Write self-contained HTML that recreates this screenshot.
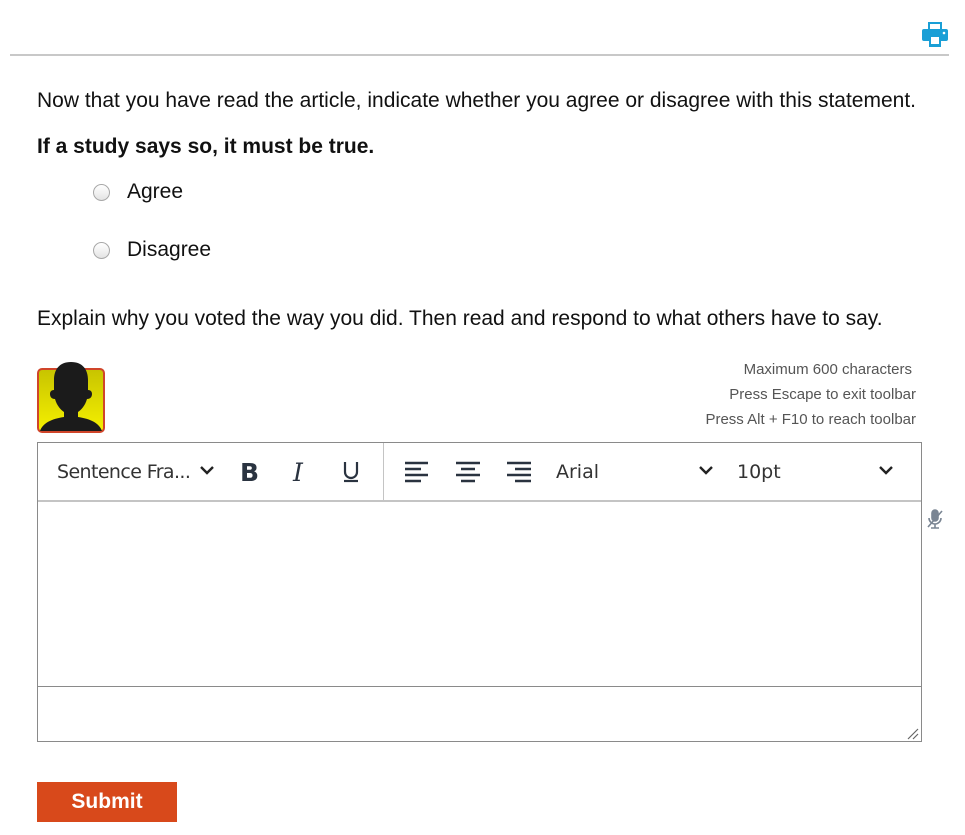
<!DOCTYPE html>
<html><head><style>
body{margin:0;width:965px;height:835px;background:#fff;font-family:"Liberation Sans",Arial,sans-serif;color:#111;position:relative;overflow:hidden}
.a{position:absolute}
.t{font-size:21px;white-space:nowrap}
.radio{width:17px;height:17px;border-radius:50%;border:1px solid #a8a8a8;background:linear-gradient(#fff,#e4e4e4);box-sizing:border-box}
.s{font-size:15px;color:#555;right:49px;white-space:nowrap}
.tb{font-family:"DejaVu Sans","Liberation Sans",sans-serif;color:#333;font-size:19px}
</style></head><body>
<svg class="a" style="left:921px;top:21px" width="28" height="27" viewBox="0 0 28 27">
<rect x="7" y="1" width="14" height="7" fill="#1a9fd6"/>
<rect x="1" y="8" width="26" height="12" rx="2" fill="#1a9fd6"/>
<rect x="9" y="3" width="10" height="5" fill="#fff"/>
<rect x="8" y="15" width="12" height="11" fill="#1a9fd6"/>
<rect x="10" y="16" width="8" height="7" fill="#fff"/>
<circle cx="23" cy="12" r="1.3" fill="#fff"/>
</svg>
<div class="a" style="left:10px;top:54px;width:939px;height:2px;background:#c8c8c8"></div>
<div class="a t" style="left:37px;top:89px">Now that you have read the article, indicate whether you agree or disagree with this statement.</div>
<div class="a t" style="left:37px;top:135px;font-weight:bold">If a study says so, it must be true.</div>
<div class="a radio" style="left:93px;top:184px"></div>
<div class="a t" style="left:127px;top:180px">Agree</div>
<div class="a radio" style="left:93px;top:242px"></div>
<div class="a t" style="left:127px;top:238px">Disagree</div>
<div class="a t" style="left:37px;top:307px">Explain why you voted the way you did. Then read and respond to what others have to say.</div>
<div class="a" style="left:37px;top:368px;width:68px;height:65px;border:2px solid #d0452a;border-radius:5px;box-sizing:border-box;background:linear-gradient(#c8c400,#f5f000);overflow:hidden"></div>
<svg class="a" style="left:37px;top:360px" width="68" height="73" viewBox="0 0 68 73">
<path d="M34 2C22 2 17 10 17 20v10c-3 0-4 2-4 4s1 5 5 5c2 7 6 11 9 13v5C14 59 6 63 3 71h62c-3-8-11-12-24-14v-5c3-2 7-6 9-13 4 0 5-3 5-5s-1-4-4-4V20C51 10 46 2 34 2z" fill="#1b1b1b"/>
</svg>
<div class="a s" style="top:361px;right:53px">Maximum 600 characters</div>
<div class="a s" style="top:386px">Press Escape to exit toolbar</div>
<div class="a s" style="top:411px">Press Alt + F10 to reach toolbar</div>
<div class="a" style="left:37px;top:442px;width:885px;height:300px;border:1px solid #8a8a8a;box-sizing:border-box"></div>
<div class="a" style="left:38px;top:500px;width:883px;height:2px;background:#c4c4c4"></div>
<div class="a" style="left:38px;top:686px;width:883px;height:1px;background:#8a8a8a"></div>
<div class="a" style="left:383px;top:443px;width:1px;height:57px;background:#c4c4c4"></div>
<div class="a tb" style="left:57px;top:461px;letter-spacing:-0.6px">Sentence Fra...</div>
<div class="a tb" style="left:556px;top:461px">Arial</div>
<div class="a tb" style="left:737px;top:461px">10pt</div>
<svg class="a" style="left:0;top:443px" width="921" height="57">
<g fill="none" stroke="#222" stroke-width="2.4">
<path d="M201 24l6 6 6-6M700 24l6 6 6-6M880 24l6 6 6-6"/>
</g>
<text x="240" y="38" font-family="DejaVu Sans,sans-serif" font-weight="bold" font-size="25" fill="#2a3340">B</text>
<text x="293" y="38" font-family="DejaVu Serif,serif" font-style="italic" font-size="25" fill="#2a3340">I</text>
<g fill="none" stroke="#2a3340" stroke-width="2.2">
<path d="M345 19v10a6 6 0 0 0 12 0V19"/>
<path d="M344 38h14"/>
</g>
<g stroke="#2a3340" stroke-width="2.5">
<path d="M405 20h23M405 26h16M405 32h23M405 38h16"/>
<path d="M456 20h24M461 26h14M456 32h24M461 38h14"/>
<path d="M507 20h24M515 26h16M507 32h24M515 38h16"/>
</g>
</svg>
<svg class="a" style="left:926px;top:508px" width="20" height="22" viewBox="0 0 20 22">
<g fill="none" stroke="#7a8593" stroke-width="1.6">
<rect x="6" y="2" width="6" height="11" rx="3" fill="#7a8593"/>
<path d="M3 10a6 6 0 0 0 12 0M9 16v4M5 20h8M2 19L16 3"/>
</g></svg>
<svg class="a" style="left:906px;top:727px" width="14" height="13"><path d="M2 12L12 2M7 12l5-5" stroke="#666" stroke-width="1.2"/></svg>
<div class="a" style="left:37px;top:782px;width:140px;height:40px;background:#d8491b;color:#fff;font-weight:bold;font-size:21px;text-align:center;line-height:40px">Submit</div>
</body></html>
